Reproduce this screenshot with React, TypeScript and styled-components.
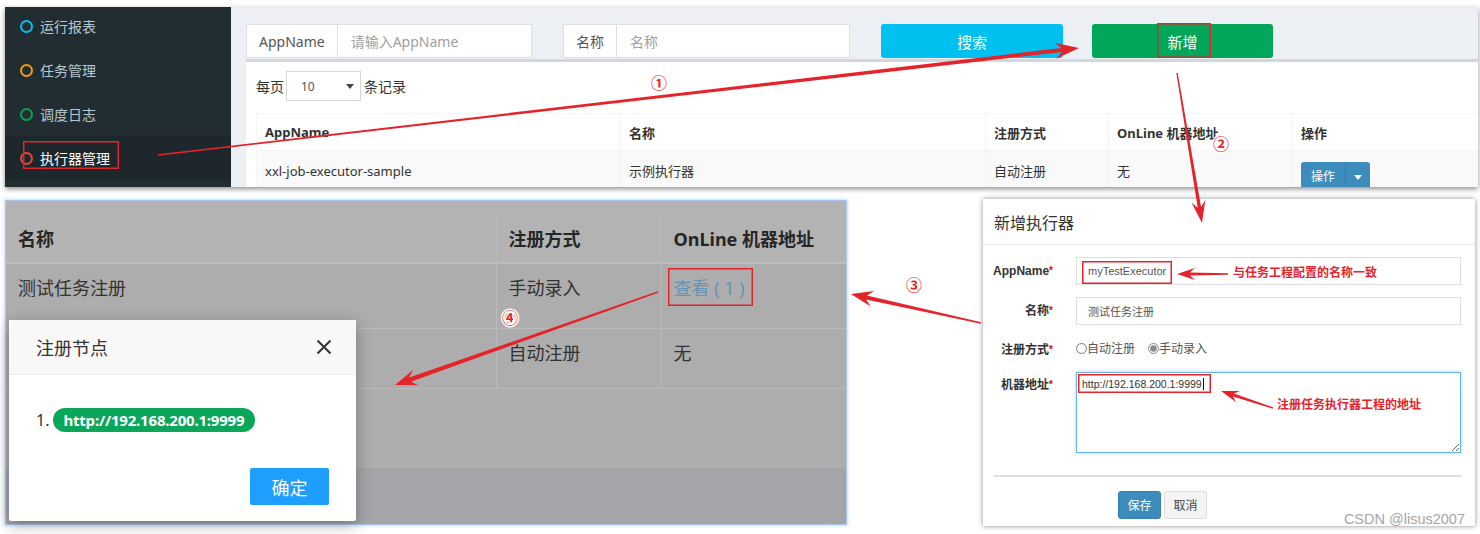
import React from "react";
import styled, { createGlobalStyle } from "styled-components";

const FONT = `"Noto Sans", "Noto Sans CJK SC", sans-serif`;

const GlobalStyle = createGlobalStyle`
  html, body { margin: 0; padding: 0; background: #fff; }
  body { font-family: ${FONT}; }
  * { box-sizing: border-box; }
`;

const Canvas = styled.div`
  position: relative;
  width: 1480px;
  height: 534px;
  overflow: hidden;
  background: #fff;
  display: flex;
  flex-direction: column;
  font-family: ${FONT};
`;

/* ---------- top screenshot: executor list ---------- */

const TopShot = styled.div`
  display: flex;
  flex: none;
  height: 180px;
  margin: 7px 2px 0 5px;
  overflow: hidden;
  box-shadow: 0 2px 5px rgba(0, 0, 0, 0.45);
`;

const Sidebar = styled.ul`
  width: 226px;
  margin: 0;
  padding: 0;
  list-style: none;
  background: #222d32;
`;

const NavItem = styled.li<{ $active?: boolean }>`
  height: 44px;
  display: flex;
  align-items: center;
  gap: 7px;
  padding-left: 15px;
  font-size: 14px;
  color: ${(p) => (p.$active ? "#fff" : "#b8c7ce")};
  background: ${(p) => (p.$active ? "#1e282c" : "transparent")};
  &:first-child {
    margin-top: -3px;
  }
`;

const Dot = styled.span<{ $c: string }>`
  flex: none;
  width: 13px;
  height: 13px;
  border: 2.5px solid ${(p) => p.$c};
  border-radius: 50%;
`;

const Main = styled.div`
  flex: 1;
  min-width: 0;
  display: flex;
  flex-direction: column;
  padding: 17px 0 0 15px;
  background: #ecf0f5;
  overflow: hidden;
`;

const SearchRow = styled.div`
  display: flex;
  flex: none;
  height: 34px;
`;

const InputGroup = styled.div<{ $w: number; $mr: number }>`
  display: flex;
  width: ${(p) => p.$w}px;
  margin-right: ${(p) => p.$mr}px;
  background: #fff;
  border: 1px solid #dcdfe4;
  font-size: 14px;
`;

const Addon = styled.span`
  display: flex;
  align-items: center;
  padding: 0 12px;
  color: #555;
  border-right: 1px solid #dcdfe4;
`;

const Placeholder = styled.span`
  display: flex;
  align-items: center;
  padding-left: 13px;
  color: #a0a0a0;
`;

const SearchBtn = styled.div<{ $w: number; $mr: number; $bg: string }>`
  display: flex;
  align-items: center;
  justify-content: center;
  width: ${(p) => p.$w}px;
  margin-right: ${(p) => p.$mr}px;
  background: ${(p) => p.$bg};
  border-radius: 3px;
  color: #fff;
  font-size: 15px;
`;

const Box = styled.div`
  flex: none;
  margin-top: 1px;
  padding: 9px 0 0 10px;
  background: #fff;
  border-top: 3px solid #d2d6de;
`;

const LengthRow = styled.div`
  display: flex;
  align-items: center;
  height: 30px;
  font-size: 14px;
  color: #333;
`;

const FakeSelect = styled.div`
  display: flex;
  align-items: center;
  justify-content: space-between;
  width: 75px;
  height: 30px;
  margin: 0 3px 0 2px;
  padding: 0 6px 0 14px;
  border: 1px solid #d2d6de;
  font-size: 12px;
  color: #555;
`;

const Caret = styled.span<{ $c?: string }>`
  width: 0;
  height: 0;
  border-left: 4px solid transparent;
  border-right: 4px solid transparent;
  border-top: 5px solid ${(p) => p.$c ?? "#444"};
`;

const DataTable = styled.table`
  width: 1222px;
  margin-top: 12px;
  border-collapse: collapse;
  table-layout: fixed;
  font-size: 13px;
  color: #333;
  th,
  td {
    border: 1px solid #f4f4f4;
    text-align: left;
    white-space: nowrap;
  }
  th {
    height: 37px;
    padding: 0 8px;
    font-weight: 700;
  }
  td {
    padding: 10px 8px 6px;
    line-height: 20px;
    vertical-align: top;
    background: #f9f9f9;
  }
`;

const OpGroup = styled.div`
  display: inline-flex;
  height: 30px;
  margin-top: 1px;
  border-radius: 3px;
  overflow: hidden;
  background: #3c8dbc;
  color: #fff;
  font-size: 12px;
`;

const OpMain = styled.span`
  display: flex;
  align-items: center;
  padding: 0 10px;
`;

const OpToggle = styled.span`
  display: flex;
  align-items: center;
  justify-content: center;
  width: 25px;
  border-left: 1px solid #367fa9;
`;

/* ---------- bottom row ---------- */

const BottomRow = styled.div`
  display: flex;
  justify-content: space-between;
  align-items: flex-start;
  margin-top: 12px;
  padding: 0 5px;
`;

const DimShot = styled.div`
  position: relative;
  display: flex;
  flex-direction: column;
  width: 842px;
  height: 325px;
  margin-top: 1px;
  padding-top: 12px;
  background: #b3b3b3;
  border: 1px solid #a9c6ec;
  box-shadow: 0 0 3px 1px #c9dcf5;
`;

const DimTable = styled.table`
  width: 840px;
  border-collapse: collapse;
  table-layout: fixed;
  font-size: 18px;
  color: #333;
  th,
  td {
    text-align: left;
    border: 1px solid #bababa;
    border-left: none;
    border-top: none;
    padding: 0 12px;
  }
  th:last-child,
  td:last-child {
    border-right: none;
  }
  th {
    height: 50px;
    font-weight: 700;
    color: #262626;
    border-bottom: 2px solid #bdbdbd;
  }
  td {
    background: #adadad;
    vertical-align: top;
    padding-top: 10px;
  }
`;

const LinkText = styled.span`
  color: #6893b2;
`;

const DimSpacer = styled.div`
  flex: 1;
  background: #adadad;
`;

const DimFooter = styled.div`
  height: 56px;
  background: #a4a5a9;
`;

const NodeModal = styled.div`
  position: absolute;
  left: 3px;
  top: 119px;
  width: 347px;
  height: 201px;
  display: flex;
  flex-direction: column;
  background: #fff;
  border-radius: 2px;
  box-shadow: 0 4px 16px rgba(0, 0, 0, 0.3);
`;

const ModalHead = styled.div`
  display: flex;
  align-items: center;
  justify-content: space-between;
  height: 55px;
  padding: 0 24px 0 27px;
  background: #f8f8f8;
  border-bottom: 1px solid #eee;
  font-size: 18px;
  color: #333;
`;

const ModalBody = styled.div`
  flex: 1;
  padding: 33px 0 0 27px;
`;

const NodeRow = styled.div`
  display: flex;
  align-items: center;
  gap: 4px;
  font-size: 16px;
  color: #333;
`;

const Pill = styled.span`
  display: inline-flex;
  align-items: center;
  height: 24px;
  padding: 0 11px 0 10px;
  border-radius: 12px;
  background: #0aa65a;
  color: #fff;
  font-size: 15px;
  font-weight: 700;
  letter-spacing: -0.2px;
`;

const ModalFoot = styled.div`
  display: flex;
  justify-content: flex-end;
  padding: 0 27px 16px;
`;

const OkBtn = styled.div`
  display: flex;
  align-items: center;
  justify-content: center;
  width: 79px;
  height: 37px;
  background: #1e9fff;
  border-radius: 2px;
  color: #fff;
  font-size: 18px;
`;

const Dialog = styled.div`
  width: 492px;
  height: 327px;
  background: #fff;
  box-shadow: 0 0 5px rgba(0, 0, 0, 0.45);
`;

const DialogHead = styled.div`
  display: flex;
  align-items: center;
  height: 46px;
  padding-left: 11px;
  border-bottom: 1px solid #e5e5e5;
  font-size: 16px;
  color: #333;
`;

const Form = styled.div`
  padding: 12px 14px 0 0;
`;

const FormRow = styled.div<{ $mb: number; $top?: boolean }>`
  display: grid;
  grid-template-columns: 70px 385px;
  column-gap: 23px;
  align-items: ${(p) => (p.$top ? "start" : "center")};
  margin-bottom: ${(p) => p.$mb}px;
`;

const Label = styled.label<{ $pt?: number }>`
  padding-top: ${(p) => p.$pt ?? 0}px;
  text-align: right;
  font-family: "Liberation Sans", "Noto Sans CJK SC", sans-serif;
  font-size: 12px;
  font-weight: 700;
  color: #333;
  line-height: 16px;
`;

const Star = styled.span`
  color: #e00;
  font-size: 10px;
  vertical-align: top;
`;

const TextInput = styled.div`
  display: flex;
  align-items: center;
  height: 28px;
  padding-left: 11px;
  border: 1px solid #dedede;
  font-family: "Liberation Sans", "Noto Sans CJK SC", sans-serif;
  font-size: 11px;
  color: #555;
`;

const RadioRow = styled.div`
  display: flex;
  align-items: center;
  height: 22px;
  gap: 13px;
  font-size: 12px;
  color: #555;
`;

const Radio = styled.label`
  display: flex;
  align-items: center;
  input {
    width: 11px;
    height: 11px;
    margin: 0;
    accent-color: #8a8a8a;
  }
`;

const AddrArea = styled.textarea`
  display: block;
  width: 385px;
  height: 81px;
  margin: 0;
  padding: 5px 5px;
  border: 1px solid #66afe9;
  border-radius: 0;
  box-shadow: 0 0 4px rgba(102, 175, 233, 0.5);
  outline: none;
  font-family: "Liberation Sans", sans-serif;
  font-size: 10.5px;
  line-height: 12px;
  color: #333;
`;

const Divider = styled.hr`
  margin: 22px 0 14px 11px;
  border: none;
  border-top: 2px solid #e0e0e0;
`;

const BtnRow = styled.div`
  display: flex;
  gap: 3px;
  padding-left: 135px;
`;

const FormBtn = styled.div<{ $primary?: boolean }>`
  display: flex;
  align-items: center;
  justify-content: center;
  width: 43px;
  height: 28px;
  border-radius: 3px;
  font-size: 12px;
  background: ${(p) => (p.$primary ? "#3c8dbc" : "#f4f4f4")};
  color: ${(p) => (p.$primary ? "#fff" : "#444")};
  border: 1px solid ${(p) => (p.$primary ? "#367fa9" : "#ddd")};
`;

const Watermark = styled.div`
  position: absolute;
  right: 15px;
  top: 510px;
  font-family: "Liberation Sans", sans-serif;
  font-size: 14.5px;
  line-height: 18px;
  color: #a5a5a5;
`;

/* ---------- annotation overlay ---------- */

const Overlay = styled.svg`
  position: absolute;
  left: 0;
  top: 0;
  pointer-events: none;
  font-family: ${FONT};
`;

type ArrowSpec = { x1: number; y1: number; x2: number; y2: number; w: number; head: number; hw: number };

const arrowPoints = ({ x1, y1, x2, y2, w, head, hw }: ArrowSpec) => {
  const len = Math.hypot(x2 - x1, y2 - y1);
  const ux = (x2 - x1) / len;
  const uy = (y2 - y1) / len;
  const nx = -uy;
  const ny = ux;
  const bx = x2 - ux * head;
  const by = y2 - uy * head;
  const kx = x2 - ux * head * 0.72;
  const ky = y2 - uy * head * 0.72;
  const p = (x: number, y: number) => `${x.toFixed(1)},${y.toFixed(1)}`;
  return [
    p(x1 + nx * 0.7, y1 + ny * 0.7),
    p(kx + (nx * w) / 2, ky + (ny * w) / 2),
    p(bx + nx * hw, by + ny * hw),
    p(x2, y2),
    p(bx - nx * hw, by - ny * hw),
    p(kx - (nx * w) / 2, ky - (ny * w) / 2),
    p(x1 - nx * 0.7, y1 - ny * 0.7),
  ].join(" ");
};

const arrows: ArrowSpec[] = [
  { x1: 158, y1: 155, x2: 1079, y2: 48, w: 4, head: 24, hw: 8 },
  { x1: 1177, y1: 73, x2: 1202, y2: 223, w: 3.5, head: 22, hw: 7 },
  { x1: 981, y1: 323, x2: 851, y2: 294, w: 4, head: 22, hw: 8 },
  { x1: 658, y1: 292, x2: 395, y2: 385, w: 4.5, head: 22, hw: 8 },
  { x1: 1228, y1: 274, x2: 1177, y2: 274, w: 3, head: 18, hw: 6 },
  { x1: 1273, y1: 408, x2: 1221, y2: 391, w: 3, head: 18, hw: 6 },
];

const marks = [
  { x: 23, y: 141, w: 96, h: 28 },
  { x: 1157, y: 23, w: 54, h: 35 },
  { x: 668, y: 268, w: 85, h: 38 },
  { x: 1082, y: 261, w: 90, h: 23 },
  { x: 1078, y: 374, w: 133, h: 19 },
];

const steps = [
  { n: "①", x: 659, y: 83 },
  { n: "②", x: 1221, y: 144 },
  { n: "③", x: 914, y: 285 },
  { n: "④", x: 510, y: 318 },
];

const RED = "#e5232a";

const Annotations = () => (
  <Overlay width={1480} height={534} viewBox="0 0 1480 534">
    {marks.map((m, i) => (
      <rect key={i} x={m.x + 0.75} y={m.y + 0.75} width={m.w - 1.5} height={m.h - 1.5} fill="none" stroke={RED} strokeWidth={1.5} />
    ))}
    {arrows.map((a, i) => (
      <polygon key={i} points={arrowPoints(a)} fill={RED} />
    ))}
    {steps.map((s) => (
      <text
        key={s.n}
        x={s.x}
        y={s.y}
        textAnchor="middle"
        dominantBaseline="central"
        fontSize={16}
        fontWeight={700}
        fill={RED}
        stroke="#fff"
        strokeWidth={3}
        paintOrder="stroke"
      >
        {s.n}
      </text>
    ))}
    <text x={1233} y={272} dominantBaseline="central" fontSize={12} fontWeight={700} fill={RED} stroke="#fff" strokeWidth={2} paintOrder="stroke">
      与任务工程配置的名称一致
    </text>
    <text x={1277} y={404} dominantBaseline="central" fontSize={12} fontWeight={700} fill={RED} stroke="#fff" strokeWidth={2} paintOrder="stroke">
      注册任务执行器工程的地址
    </text>
    <line x1={1203.5} y1={378} x2={1203.5} y2={390} stroke="#111" strokeWidth={1} />
  </Overlay>
);

const CloseIcon = () => (
  <svg width="16" height="16" viewBox="0 0 16 16">
    <path d="M1.5 1.5 L14.5 14.5 M14.5 1.5 L1.5 14.5" stroke="#333" strokeWidth="2" fill="none" />
  </svg>
);

const navItems = [
  { label: "运行报表", color: "#00c0ef" },
  { label: "任务管理", color: "#f39c12" },
  { label: "调度日志", color: "#00a65a" },
  { label: "执行器管理", color: "#dd4b39", active: true },
];

export default function App() {
  return (
    <>
      <GlobalStyle />
      <Canvas>
        <TopShot>
          <Sidebar>
            {navItems.map((n) => (
              <NavItem key={n.label} $active={n.active}>
                <Dot $c={n.color} />
                {n.label}
              </NavItem>
            ))}
          </Sidebar>
          <Main>
            <SearchRow>
              <InputGroup $w={286} $mr={31}>
                <Addon>AppName</Addon>
                <Placeholder>请输入AppName</Placeholder>
              </InputGroup>
              <InputGroup $w={287} $mr={31}>
                <Addon>名称</Addon>
                <Placeholder>名称</Placeholder>
              </InputGroup>
              <SearchBtn $w={182} $mr={29} $bg="#00c0ef">搜索</SearchBtn>
              <SearchBtn $w={181} $mr={0} $bg="#00a65a">新增</SearchBtn>
            </SearchRow>
            <Box>
              <LengthRow>
                每页
                <FakeSelect>
                  10
                  <Caret />
                </FakeSelect>
                条记录
              </LengthRow>
              <DataTable>
                <colgroup>
                  <col style={{ width: 364 }} />
                  <col style={{ width: 365 }} />
                  <col style={{ width: 123 }} />
                  <col style={{ width: 184 }} />
                  <col style={{ width: 186 }} />
                </colgroup>
                <thead>
                  <tr>
                    <th>AppName</th>
                    <th>名称</th>
                    <th>注册方式</th>
                    <th>OnLine 机器地址</th>
                    <th>操作</th>
                  </tr>
                </thead>
                <tbody>
                  <tr>
                    <td>xxl-job-executor-sample</td>
                    <td>示例执行器</td>
                    <td>自动注册</td>
                    <td>无</td>
                    <td>
                      <OpGroup>
                        <OpMain>操作</OpMain>
                        <OpToggle>
                          <Caret $c="#fff" />
                        </OpToggle>
                      </OpGroup>
                    </td>
                  </tr>
                </tbody>
              </DataTable>
            </Box>
          </Main>
        </TopShot>

        <BottomRow>
          <DimShot>
            <DimTable>
              <colgroup>
                <col style={{ width: 490 }} />
                <col style={{ width: 165 }} />
                <col style={{ width: 185 }} />
              </colgroup>
              <thead>
                <tr>
                  <th>名称</th>
                  <th>注册方式</th>
                  <th>OnLine 机器地址</th>
                </tr>
              </thead>
              <tbody>
                <tr style={{ height: 65 }}>
                  <td>测试任务注册</td>
                  <td>手动录入</td>
                  <td>
                    <LinkText>查看 ( 1 )</LinkText>
                  </td>
                </tr>
                <tr style={{ height: 60 }}>
                  <td />
                  <td>自动注册</td>
                  <td>无</td>
                </tr>
              </tbody>
            </DimTable>
            <DimSpacer />
            <DimFooter />
            <NodeModal>
              <ModalHead>
                注册节点
                <CloseIcon />
              </ModalHead>
              <ModalBody>
                <NodeRow>
                  1.
                  <Pill>http://192.168.200.1:9999</Pill>
                </NodeRow>
              </ModalBody>
              <ModalFoot>
                <OkBtn>确定</OkBtn>
              </ModalFoot>
            </NodeModal>
          </DimShot>

          <Dialog>
            <DialogHead>新增执行器</DialogHead>
            <Form>
              <FormRow $mb={12}>
                <Label>
                  AppName<Star>*</Star>
                </Label>
                <TextInput>myTestExecutor</TextInput>
              </FormRow>
              <FormRow $mb={12}>
                <Label>
                  名称<Star>*</Star>
                </Label>
                <TextInput>测试任务注册</TextInput>
              </FormRow>
              <FormRow $mb={13}>
                <Label $pt={4}>
                  注册方式<Star>*</Star>
                </Label>
                <RadioRow>
                  <Radio>
                    <input type="radio" name="addressType" readOnly />
                    自动注册
                  </Radio>
                  <Radio>
                    <input type="radio" name="addressType" defaultChecked />
                    手动录入
                  </Radio>
                </RadioRow>
              </FormRow>
              <FormRow $mb={0} $top>
                <Label $pt={5}>
                  机器地址<Star>*</Star>
                </Label>
                <AddrArea readOnly defaultValue="http://192.168.200.1:9999" />
              </FormRow>
              <Divider />
              <BtnRow>
                <FormBtn $primary>保存</FormBtn>
                <FormBtn>取消</FormBtn>
              </BtnRow>
            </Form>
          </Dialog>
        </BottomRow>

        <Watermark>CSDN @lisus2007</Watermark>
        <Annotations />
      </Canvas>
    </>
  );
}
